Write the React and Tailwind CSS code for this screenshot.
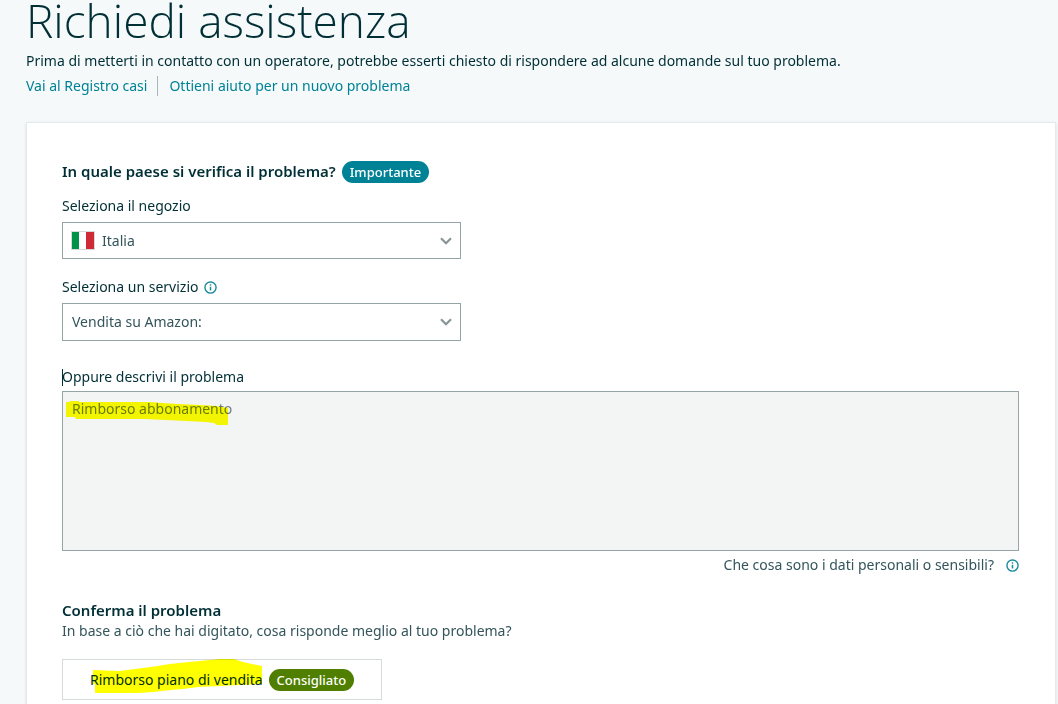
import { useState } from 'react';

function InfoIcon() {
  return (
    <svg viewBox="0 0 14 14" className="size-[13px]" fill="none" aria-hidden="true">
      <circle cx="7" cy="7" r="6" stroke="#1b8a9e" strokeWidth="1.5" />
      <path d="M7 6.2v4" stroke="#1b8a9e" strokeWidth="1.6" />
      <path d="M7 3.5v1.5" stroke="#1b8a9e" strokeWidth="1.6" />
    </svg>
  );
}

function Chevron() {
  return (
    <svg
      viewBox="0 0 12 8"
      className="pointer-events-none absolute top-1/2 right-[9px] h-2 w-3 -translate-y-1/2"
      fill="none"
      aria-hidden="true"
    >
      <path d="M1 1.2l5 5 5-5" stroke="#879596" strokeWidth="2.2" />
    </svg>
  );
}

function ItalianFlag() {
  return (
    <svg
      viewBox="0 0 24 19"
      className="pointer-events-none absolute top-[9px] left-[9px] h-[19px] w-6"
      aria-hidden="true"
    >
      <rect width="24" height="19" fill="#d5dbdb" />
      <rect x="1" y="1" width="22" height="17" fill="#ffffff" />
      <rect x="1" y="1" width="7" height="17" fill="#009246" />
      <rect x="15" y="1" width="8" height="17" fill="#ce2b37" />
    </svg>
  );
}

export default function App() {
  const [store, setStore] = useState('it');
  const [service, setService] = useState('amazon');
  const [problem, setProblem] = useState('Rimborso abbonamento');

  return (
    <main className="min-h-screen bg-[#f5f9fa] pr-0.5 pl-[26px] font-['Noto_Sans',sans-serif] text-sm text-[#002f36]">
      <header>
        <h1 className="font-['Open_Sans',sans-serif] text-[46px] leading-[40px] font-light">Richiedi assistenza</h1>
        <p className="mt-[10px] leading-[22px]">
          Prima di metterti in contatto con un operatore, potrebbe esserti chiesto di rispondere ad alcune domande sul tuo
          problema.
        </p>
        <nav className="mt-1 flex h-5 items-center text-[#008296]">
          <a href="#registro" className="mr-[10px]">
            Vai al Registro casi
          </a>
          <a href="#nuovo" className="border-l border-[#aab7b8] pl-[11px]">
            Ottieni aiuto per un nuovo problema
          </a>
        </nav>
      </header>

      <section className="mt-[26px] border border-[#e2eaec] bg-white pt-9 pr-9 pb-1 pl-[35px] shadow-sm">
        <div className="flex items-end gap-1.5">
          <h2 className="text-[15px] leading-6 font-semibold">In quale paese si verifica il problema?</h2>
          <span className="rounded-full bg-[#008296] px-2 text-[13px] leading-[22px] font-medium text-white">
            Importante
          </span>
        </div>

        <label htmlFor="store" className="mt-[13px] block leading-5">
          Seleziona il negozio
        </label>
        <div className="relative mt-1.5 w-[399px] max-w-full">
          <select
            id="store"
            value={store}
            onChange={(e) => setStore(e.target.value)}
            className="block h-[37px] w-full appearance-none border border-[#95a5a6] bg-white pr-8 pl-[39px] text-[#33555b]"
          >
            <option value="it">Italia</option>
          </select>
          <ItalianFlag />
          <Chevron />
        </div>

        <div className="mt-[18px] flex h-5 items-center gap-1.5">
          <label htmlFor="service">Seleziona un servizio</label>
          <button type="button" aria-label="Informazioni sul servizio">
            <InfoIcon />
          </button>
        </div>
        <div className="relative mt-1.5 w-[399px] max-w-full">
          <select
            id="service"
            value={service}
            onChange={(e) => setService(e.target.value)}
            className="block h-[38px] w-full appearance-none border border-[#95a5a6] bg-white pr-8 pl-[9px] text-[#33555b]"
          >
            <option value="amazon">Vendita su Amazon:</option>
          </select>
          <Chevron />
        </div>

        <label htmlFor="problem" className="mt-[26px] flex h-5 items-center">
          <span className="-mr-px h-[17px] w-px bg-[#002f36]" />
          Oppure descrivi il problema
        </label>
        <div className="relative mt-1">
          <textarea
            id="problem"
            value={problem}
            onChange={(e) => setProblem(e.target.value)}
            className="block h-40 w-full resize-none border border-[#95a5a6] bg-[#f3f5f5] px-[9px] py-[7px] leading-5 text-[#6b7c80]"
          />
          <svg
            viewBox="0 0 164 28"
            className="pointer-events-none absolute top-2 left-1 h-7 w-[164px] mix-blend-multiply"
            aria-hidden="true"
          >
            <path
              d="M0 3H3L5 2H13V3H84L96 4L112 5L134 6L150 7L162 9V26H151L148 24L140 23L120 22L100 21L78 20L10 20L9 18H0Z"
              fill="#ffff00"
            />
          </svg>
        </div>
        <div className="mt-1 flex h-5 items-center justify-end gap-3 text-[#33555b]">
          <span>Che cosa sono i dati personali o sensibili?</span>
          <button type="button" aria-label="Informazioni sui dati personali">
            <InfoIcon />
          </button>
        </div>

        <h2 className="mt-[25px] text-[15px] leading-5 font-semibold">Conferma il problema</h2>
        <p className="mt-px leading-5 text-[#33555b]">
          In base a ciò che hai digitato, cosa risponde meglio al tuo problema?
        </p>

        <button
          type="button"
          className="relative mt-[18px] flex h-[41px] w-80 max-w-full items-center gap-1.5 border border-[#d5dbdb] bg-white pl-[27px]"
        >
          <span>Rimborso piano di vendita</span>
          <span className="rounded-full bg-[#507f00] px-2 text-[13px] leading-[22px] font-medium text-white">
            Consigliato
          </span>
          <svg
            viewBox="0 0 170 36"
            className="pointer-events-none absolute -top-px left-[30px] h-9 w-[170px] mix-blend-multiply"
            aria-hidden="true"
          >
            <path
              d="M0 11L26 12L58 8L77 5L96 3L127 0H141L150 3L159 5L169 7V25L146 26L128 27L105 28L90 30L78 31L60 33L46 34H2V25H0Z"
              fill="#ffff00"
            />
          </svg>
        </button>
      </section>
    </main>
  );
}
